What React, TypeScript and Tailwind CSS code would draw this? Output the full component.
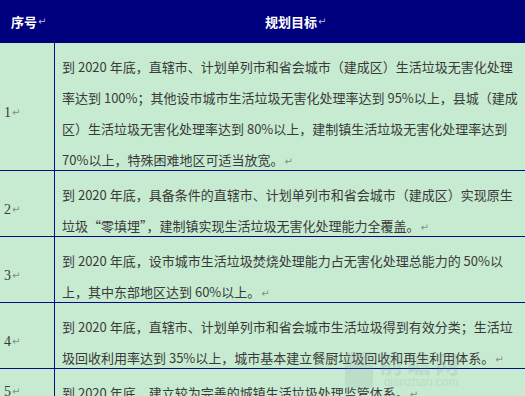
const ROWS = [
  {
    no: '1',
    lines: [
      '到 2020 年底，直辖市、计划单列市和省会城市（建成区）生活垃圾无害化处理',
      '率达到 100%；其他设市城市生活垃圾无害化处理率达到 95%以上，县城（建成',
      '区）生活垃圾无害化处理率达到 80%以上，建制镇生活垃圾无害化处理率达到',
      '70%以上，特殊困难地区可适当放宽。',
    ],
  },
  {
    no: '2',
    lines: [
      '到 2020 年底，具备条件的直辖市、计划单列市和省会城市（建成区）实现原生',
      '垃圾“零填埋”，建制镇实现生活垃圾无害化处理能力全覆盖。',
    ],
  },
  {
    no: '3',
    lines: [
      '到 2020 年底，设市城市生活垃圾焚烧处理能力占无害化处理总能力的 50%以',
      '上，其中东部地区达到 60%以上。',
    ],
  },
  {
    no: '4',
    lines: [
      '到 2020 年底，直辖市、计划单列市和省会城市生活垃圾得到有效分类；生活垃',
      '圾回收利用率达到 35%以上，城市基本建立餐厨垃圾回收和再生利用体系。',
    ],
  },
  {
    no: '5',
    lines: ['到 2020 年底，建立较为完善的城镇生活垃圾处理监管体系。'],
  },
];

function Mark({ light }: { light?: boolean }) {
  return (
    <span className={`ml-[1px] leading-none text-[10px] font-normal font-['DejaVu_Sans',sans-serif] ${light ? 'text-[#b8b8d8]' : 'text-[#8a8a8a]'}`}>
      ↵
    </span>
  );
}

export default function App() {
  return (
    <div className="relative w-[525px] h-[396px] overflow-hidden bg-[#c6ebd0] font-['Noto_Sans_CJK_SC',sans-serif] text-[13px] text-[#3a3a3a]">
      {/* Header */}
      <div className="flex h-[43px] bg-[#00007f] text-white font-bold">
        <div className="w-[55px] flex items-center pl-[11px]">
          序号<Mark light />
        </div>
        <div className="flex-1 flex items-center pl-[210px]">
          规划目标<Mark light />
        </div>
      </div>

      {/* Rows */}
      {ROWS.map((row, i) => (
        <div key={row.no} className={`flex ${i > 0 ? 'border-t border-[#0a0a80]' : ''}`}>
          <div className="w-[55px] shrink-0 border-r border-[#0a0a80] flex items-center pl-[4px] pt-[12px] font-['Liberation_Serif',serif] text-[14px] leading-none">
            {row.no}
            <Mark />
          </div>
          <div className="flex-1 pl-[7px] pt-[8px] whitespace-nowrap">
            <div className="leading-[31px] -mb-[5px]">
              {row.lines.map((line, j) => (
                <div key={j} className="h-[31px]">
                  {line}
                  {j === row.lines.length - 1 && <Mark />}
                </div>
              ))}
            </div>
          </div>
        </div>
      ))}

      {/* watermark */}
      <div className="absolute left-[345px] top-[350px] flex items-center gap-[6px] opacity-15 pointer-events-none">
        <div className="w-[28px] h-[36px] rounded-[4px] bg-[#8a9aa8]" />
        <div className="flex flex-col items-center">
          <span className="text-[24px] leading-[26px] font-bold text-[#7a8a98] tracking-[4px]">前瞻网</span>
          <span className="text-[12px] leading-[13px] font-['Liberation_Sans',sans-serif] text-[#7a8a98]">qianzhan.com</span>
        </div>
      </div>
    </div>
  );
}
